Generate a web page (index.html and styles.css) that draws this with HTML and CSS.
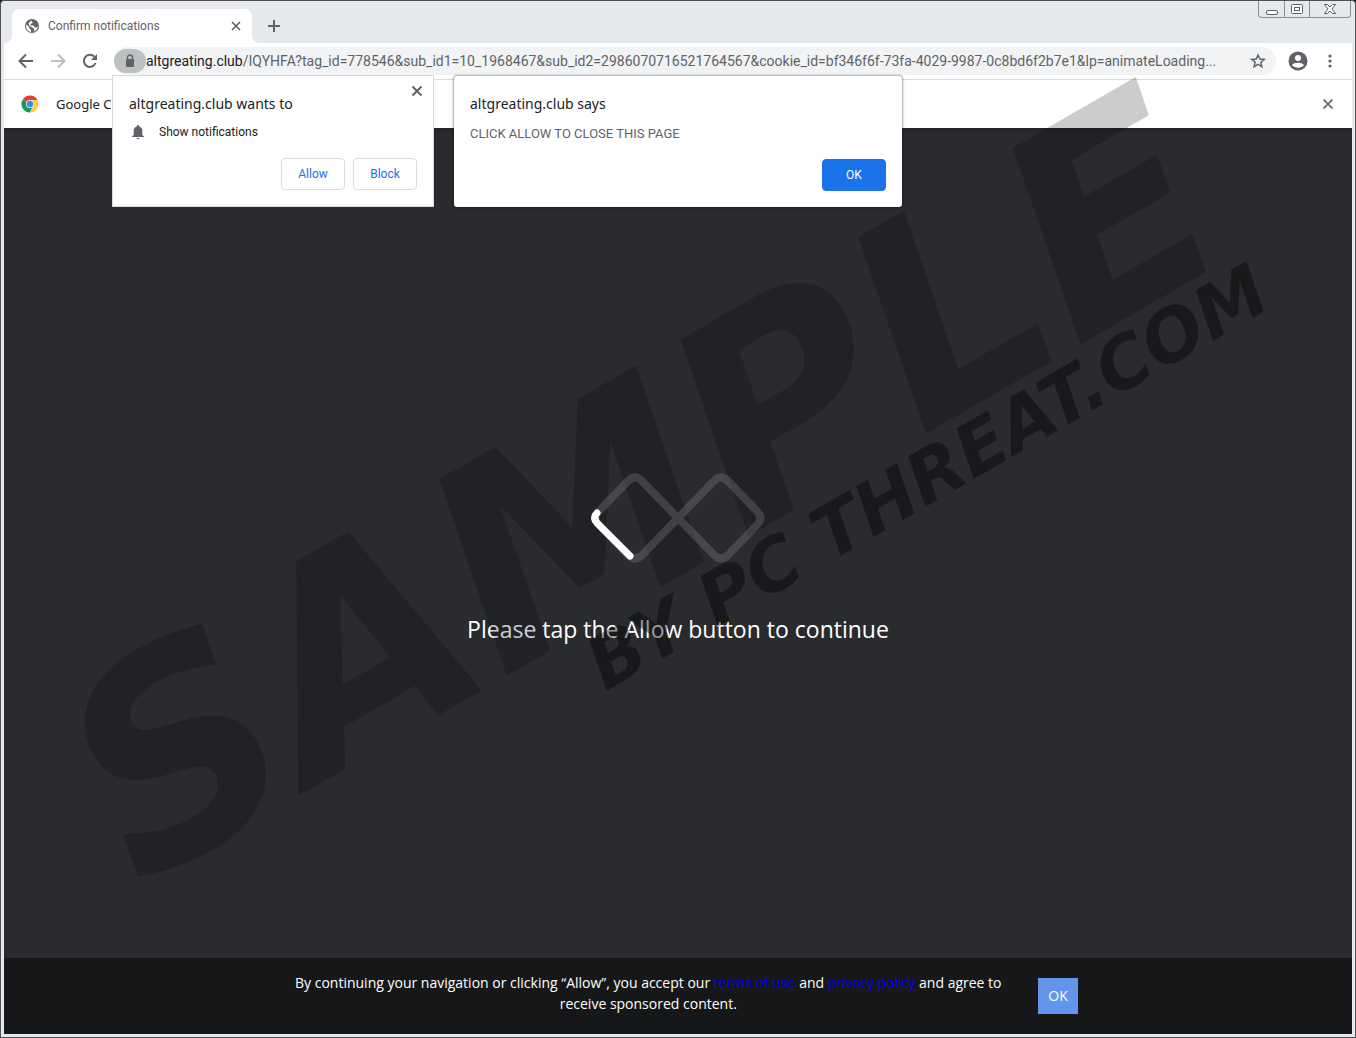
FILE: index.html
```html
<!DOCTYPE html>
<html lang="en">
<head>
<meta charset="utf-8">
<title>Confirm notifications</title>
<link rel="stylesheet" href="styles.css">
</head>
<body>
<div class="window">
  <header class="tabstrip">
    <div class="tab">
      <svg class="globe" viewBox="0 0 16 16" width="16" height="16" aria-hidden="true"><circle cx="8" cy="8" r="7" fill="#5f6368"/><path d="M2.500 6.500L5.500 9.500V10.500L7 12V14C4 13.600 2 11 2 8ZM7 2.500C7.500 4 9 3.500 8.500 5L6.500 6V7.500H9.500L11 9.500H13L13.800 7.500C14 10.500 12 13 9.500 13.700L10.500 11.500L8.500 9.500L5.500 8L4.500 5.500Z" fill="#fff"/></svg>
      <span class="tab-title">Confirm notifications</span>
      <button class="icon-button" aria-label="Close tab"><svg viewBox="0 0 16 16" width="16" height="16"><path d="M4 4L12 12M12 4L4 12" stroke="#5f6368" stroke-width="1.700"/></svg></button>
    </div>
    <button class="icon-button new-tab" aria-label="New tab"><svg viewBox="0 0 16 16" width="16" height="16"><path d="M8 2V14M2 8H14" stroke="#5f6368" stroke-width="2"/></svg></button>
    <div class="window-controls">
      <button class="control" aria-label="Minimize"><svg viewBox="0 0 14 12" width="14" height="12"><rect x="1.500" y="7.500" width="11" height="4" rx="1.500" fill="#fff" stroke="#5c5f63"/></svg></button>
      <button class="control" aria-label="Maximize"><svg viewBox="0 0 14 12" width="14" height="12"><rect x="1.500" y="1.500" width="11" height="9" rx="1" fill="#fff" stroke="#5c5f63"/><rect x="4.500" y="4.500" width="5" height="3" fill="none" stroke="#5c5f63"/></svg></button>
      <button class="control control-close" aria-label="Close window"><svg viewBox="0 0 14 12" width="14" height="12"><path d="M1.500 1.500H4.500L7 4L9.500 1.500H12.500L9 6L12.500 10.500H9.500L7 8L4.500 10.500H1.500L5 6Z" fill="#fff" stroke="#5c5f63"/></svg></button>
    </div>
  </header>

  <nav class="toolbar" aria-label="Browser toolbar">
    <button class="icon-button" aria-label="Back"><svg viewBox="0 0 16 16" width="16" height="16"><path d="M15 8H2M8 1.500L1.500 8L8 14.500" fill="none" stroke="#5f6368" stroke-width="2"/></svg></button>
    <button class="icon-button" aria-label="Forward" disabled><svg viewBox="0 0 16 16" width="16" height="16"><path d="M1 8H14M8 1.500L14.500 8L8 14.500" fill="none" stroke="#bdbfc1" stroke-width="2"/></svg></button>
    <button class="icon-button" aria-label="Reload"><svg viewBox="0 0 16 16" width="16" height="16"><path d="M13.500 10A6 6 0 1 1 12.300 3.800" fill="none" stroke="#5f6368" stroke-width="2"/><path d="M15 1V7H9Z" fill="#5f6368"/></svg></button>
    <div class="omnibox">
      <button class="site-info" aria-label="View site information"><svg viewBox="0 0 10 14" width="10" height="14"><path d="M2.500 6V3.500A2.500 2.500 0 0 1 7.500 3.500V6" fill="none" stroke="#5f6368" stroke-width="1.400"/><rect x="1" y="5" width="8" height="8" rx="1" fill="#5f6368"/></svg></button>
      <div class="address" role="textbox" contenteditable="true" spellcheck="false" aria-label="Address"><span class="host">altgreating.club</span>/IQYHFA?tag_id=778546&amp;sub_id1=10_1968467&amp;sub_id2=2986070716521764567&amp;cookie_id=bf346f6f-73fa-4029-9987-0c8bd6f2b7e1&amp;lp=animateLoading...</div>
      <button class="icon-button" aria-label="Bookmark this page"><svg viewBox="0 0 16 16" width="16" height="16"><path d="M8 2L9.800 6L14.200 6.400L10.900 9.300L11.900 13.600L8 11.300L4.100 13.600L5.100 9.300L1.800 6.400L6.200 6Z" fill="none" stroke="#5f6368" stroke-width="1.500"/></svg></button>
    </div>
    <button class="icon-button profile" aria-label="Profile"><svg viewBox="0 0 20 20" width="20" height="20"><circle cx="10" cy="10" r="9.500" fill="#5f6368"/><circle cx="10" cy="7" r="3" fill="#fff"/><path d="M4 14.300C5.500 11 14.500 11 16 14.300C13.500 17.500 6.500 17.500 4 14.300Z" fill="#fff"/></svg></button>
    <button class="icon-button" aria-label="Menu"><svg viewBox="0 0 16 16" width="16" height="16" fill="#5f6368"><circle cx="8" cy="3" r="1.600"/><circle cx="8" cy="8" r="1.600"/><circle cx="8" cy="13" r="1.600"/></svg></button>
  </nav>

  <div class="infobar">
    <svg viewBox="0 0 18 18" width="18" height="18" aria-hidden="true"><path d="M9 9L1.600 4.700A8.500 8.500 0 0 1 16.400 4.700Z" fill="#db4437"/><path d="M9 9L1.600 4.700A8.500 8.500 0 0 0 9 17.500L12 11Z" fill="#0f9d58"/><path d="M9 5H16.500A8.500 8.500 0 0 1 9 17.500L12.500 10.500Z" fill="#ffcd40"/><circle cx="9" cy="9" r="4" fill="#f1f1f1"/><circle cx="9" cy="9" r="3.200" fill="#4285f4"/></svg>
    <span class="infobar-text">Google Chrome</span>
    <button class="icon-button" aria-label="Dismiss"><svg viewBox="0 0 16 16" width="16" height="16"><path d="M3.500 3.500L12.500 12.500M12.500 3.500L3.500 12.500" stroke="#75787c" stroke-width="2"/></svg></button>
  </div>

  <main class="page">
    <svg class="loader" viewBox="588 470 180 96" width="180" height="96" fill="none" aria-hidden="true">
      <path d="M642 481Q635 474 628 481L599 511Q592 518 599 525L628 555Q635 562 642 555L714 481Q721 474 728 481L757 511Q764 518 757 525L728 555Q721 562 714 555Z" stroke="#fff" stroke-opacity=".14" stroke-width="8"/>
      <path d="M597 513Q592 518 598 524L630 556" stroke="#fff" stroke-width="7" stroke-linecap="round"/>
    </svg>
    <p class="message">Please tap the Allow button to continue</p>
  </main>

  <footer class="consent">
    <p class="consent-text">By continuing your navigation or clicking “Allow”, you accept our <a href="#terms">terms of use </a>and <a href="#privacy">privacy policy </a>and agree to receive sponsored content.</p>
    <button class="consent-ok">OK</button>
  </footer>

  <section class="popup permission" role="dialog" aria-labelledby="permission-title">
    <button class="icon-button popup-close" aria-label="Close"><svg viewBox="0 0 16 16" width="16" height="16"><path d="M3.500 3.500L12.500 12.500M12.500 3.500L3.500 12.500" stroke="#5f6368" stroke-width="2"/></svg></button>
    <h2 class="popup-title" id="permission-title">altgreating.club wants to</h2>
    <p class="permission-row"><svg viewBox="0 0 16 16" width="16" height="16" aria-hidden="true"><path d="M8 1C8.800 1 9 1.500 9 2.200C11.200 2.800 12.300 4.500 12.300 7V11L14 12.500V13H2V12.500L3.700 11V7C3.700 4.500 4.800 2.800 7 2.200C7 1.500 7.200 1 8 1ZM6.500 14H9.500C9.300 15.500 6.700 15.500 6.500 14Z" fill="#5f6368"/></svg>Show notifications</p>
    <div class="actions">
      <button class="button">Allow</button>
      <button class="button">Block</button>
    </div>
  </section>

  <section class="popup alert" role="alertdialog" aria-labelledby="alert-title">
    <h2 class="popup-title" id="alert-title">altgreating.club says</h2>
    <p class="alert-text">CLICK ALLOW TO CLOSE THIS PAGE</p>
    <div class="actions">
      <button class="button button-primary">OK</button>
    </div>
  </section>

  <div class="watermark">
    <span class="mark mark-large">SAMPLE</span>
    <span class="mark mark-small">BY PC THREAT.COM</span>
  </div>
</div>
</body>
</html>
```
FILE: styles.css
```css
* { box-sizing: border-box; }

body {
  margin: 0;
  background: #222;
  font: 12px/16px Roboto, "Noto Sans", sans-serif;
  color: #202124;
}

h2, p { margin: 0; font-weight: 400; }

button {
  margin: 0;
  padding: 0;
  border: 0;
  background: none;
  font: inherit;
  color: inherit;
}

svg { display: block; flex: none; }

.window {
  position: relative;
  display: flex;
  flex-direction: column;
  min-height: 100vh;
  padding: 0 3px 3px;
  border: 1px solid #504f53;
  border-radius: 4px 4px 0 0;
  background: #e6e9ec;
  overflow: hidden;
}

.icon-button { display: flex; flex: none; }

.tabstrip {
  display: flex;
  align-items: flex-end;
  height: 42px;
  padding-left: 8px;
}

.tab {
  position: relative;
  display: flex;
  align-items: center;
  gap: 8px;
  width: 240px;
  height: 34px;
  padding: 0 8px 0 12px;
  border-radius: 8px 8px 0 0;
  background: #fff;
  color: #5f6368;
}

.tab::before,
.tab::after {
  content: "";
  position: absolute;
  bottom: 0;
  width: 8px;
  height: 8px;
}
.tab::before { left: -8px; background: radial-gradient(circle at 0 0, #e6e9ec 8px, #fff 8px); }
.tab::after { right: -8px; background: radial-gradient(circle at 100% 0, #e6e9ec 8px, #fff 8px); }

.tab-title { flex: 1; white-space: nowrap; }
.new-tab { margin: 0 0 9px 14px; }

.window-controls {
  display: flex;
  align-self: flex-start;
  height: 17px;
  margin: 0 1px 0 auto;
  border: 1px solid #8a8d91;
  border-top: 0;
  border-radius: 0 0 4px 4px;
}
.control {
  display: flex;
  align-items: center;
  justify-content: center;
  width: 25px;
}
.control + .control { border-left: 1px solid #8a8d91; }
.control-close { width: 41px; }

.toolbar {
  display: flex;
  align-items: center;
  gap: 16px;
  height: 37px;
  padding: 0 14px;
  border-bottom: 1px solid #d9dbde;
  background: #fff;
}
.profile { margin: 0 -2px 0 -4px; }

.omnibox {
  display: flex;
  flex: 1;
  align-items: center;
  min-width: 0;
  height: 28px;
  padding-right: 10px;
  border-radius: 14px;
  background: #f1f3f4;
}
.site-info {
  display: flex;
  flex: none;
  align-items: center;
  justify-content: center;
  width: 32px;
  height: 24px;
  border-radius: 12px;
  background: #bdc1c1;
}
.address {
  flex: 1;
  min-width: 0;
  overflow: hidden;
  font-size: 14px;
  line-height: 20px;
  white-space: nowrap;
  color: #5f6368;
}
.host { color: #202124; }

.infobar {
  display: flex;
  align-items: center;
  height: 48px;
  padding: 0 16px 0 17px;
  gap: 17px;
  background: #fff;
  font-family: "Noto Sans", sans-serif;
  font-size: 13px;
}
.infobar-text { flex: 1; }

.page {
  display: flex;
  flex: 1;
  flex-direction: column;
  align-items: center;
  justify-content: center;
  gap: 47px;
  padding-top: 29px;
  background: linear-gradient(#222326, #2a2b2f 6px);
}
.loader { position: relative; z-index: 1; }
.message {
  font-family: "Open Sans", sans-serif;
  font-size: 23px;
  line-height: 32px;
  color: #fff;
}

.consent {
  display: flex;
  align-items: center;
  justify-content: center;
  gap: 32px;
  min-height: 76px;
  padding: 14px 0 20px 12px;
  background: #161719;
  font-family: "Open Sans", sans-serif;
  color: #fff;
}
.consent-text {
  max-width: 716px;
  font-size: 14px;
  line-height: 21px;
  text-align: center;
}
.consent-text a {
  color: #00f;
  text-decoration: underline;
  text-decoration-skip-ink: none;
}
.consent-ok {
  height: 36px;
  margin-top: 6px;
  padding: 0 10px;
  background: #6495ed;
  font-size: 14px;
}

.popup {
  position: absolute;
  top: 75px;
  display: flex;
  flex-direction: column;
  padding: 16px;
  background: #fff;
}
.permission {
  top: 74px;
  left: 111px;
  width: 322px;
  height: 132px;
  border: 1px solid #d5d7da;
}
.alert {
  left: 453px;
  width: 448px;
  height: 131px;
  border-radius: 3px;
  box-shadow: 0 0 2px 1px rgba(0, 0, 0, .35);
}
.popup-title {
  padding-top: 2px;
  font-family: "Noto Sans", sans-serif;
  font-size: 14px;
  line-height: 20px;
}
.popup-close { position: absolute; top: 7px; right: 8px; }
.permission-row {
  display: flex;
  align-items: center;
  gap: 13px;
  margin-top: 10px;
  padding-left: 1px;
}
.alert-text { margin-top: 12px; font-size: 13px; color: #5f6368; }
.actions {
  display: flex;
  justify-content: flex-end;
  gap: 8px;
  margin-top: auto;
}
.button {
  width: 64px;
  height: 32px;
  border: 1px solid #dadce0;
  border-radius: 4px;
  color: #1a73e8;
}
.button-primary { border-color: #1a73e8; background: #1a73e8; color: #fff; }

.watermark {
  position: absolute;
  inset: 0;
  pointer-events: none;
}
.mark {
  position: absolute;
  font-family: "DejaVu Sans", sans-serif;
  font-weight: 700;
  font-style: italic;
  line-height: 1;
  white-space: nowrap;
  transform: rotate(-30deg);
  transform-origin: 0 100%;
}
.mark-large {
  left: 160px;
  top: 644px;
  font-size: 280px;
  color: rgba(0, 0, 0, .2);
}
.mark-small {
  left: 610px;
  top: 628px;
  font-size: 72px;
  color: rgba(0, 0, 0, .4);
}
```
